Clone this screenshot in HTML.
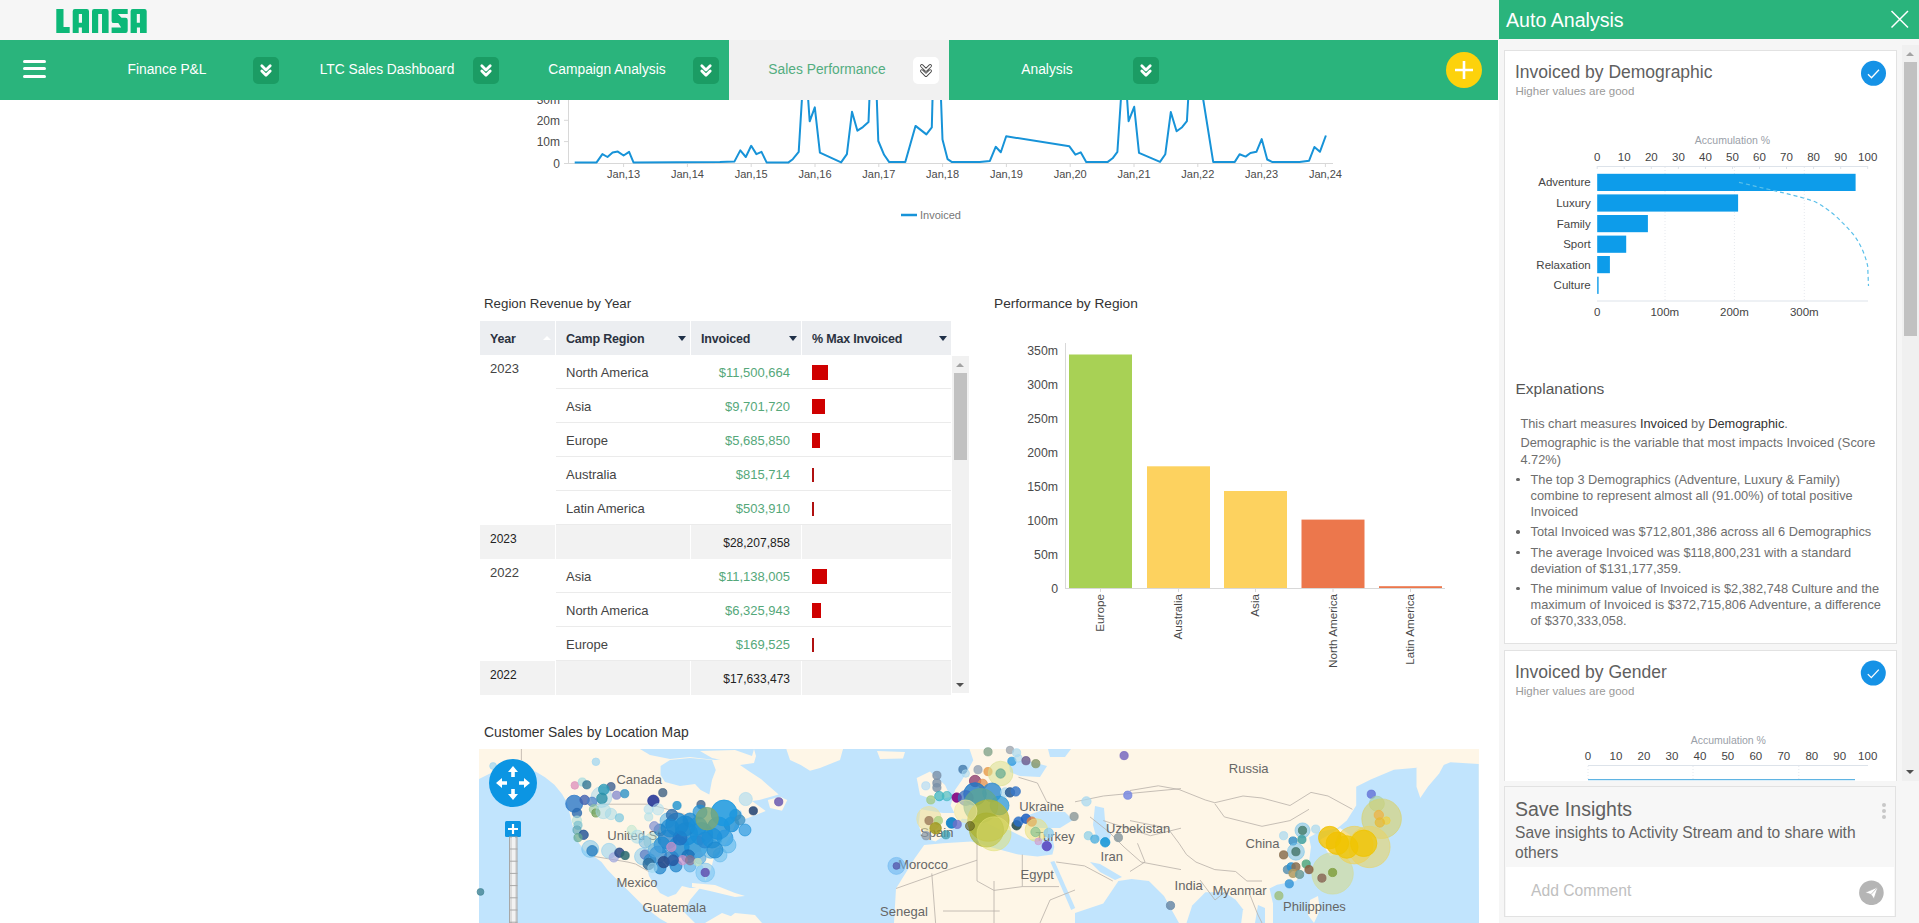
<!DOCTYPE html><html><head><meta charset="utf-8"><style>
*{box-sizing:border-box;margin:0;padding:0}
html,body{width:1919px;height:923px;overflow:hidden;background:#fff;font-family:"Liberation Sans",sans-serif;position:relative}
.a{position:absolute}
svg text{font-family:"Liberation Sans",sans-serif}
#top{left:0;top:0;width:1499px;height:40px;background:#f6f6f6}
#nav{left:0;top:40px;width:1498px;height:60px;background:#2ab47c}
.ham{left:23px;height:3px;width:23px;background:#fff;border-radius:2px}
.tab{top:40px;height:60px;width:220px}
.tab .t{position:absolute;left:0;width:196px;top:0;height:60px;line-height:59px;text-align:center;font-size:13.8px;color:#fff;white-space:nowrap}
.tab .bx{position:absolute;left:184px;top:17px;width:26px;height:27px;border-radius:5px;background:#1b9c64}
.tab.act{background:#f1f1f1}
.tab.act .t{color:#53ad7f}
.tab.act .bx{background:#fff}
#plus{left:1446px;top:52px;width:36px;height:36px;border-radius:50%;background:#fdd20c}
.ax{font-size:11px;fill:#4a4a4a}
.ax2{font-size:12.3px;fill:#4a4a4a}
.ttl2{font-size:13.7px;fill:#333}
.ttl{font-size:13.3px;color:#333;white-space:nowrap}
.th{background:#eceef1;font-size:12.5px;font-weight:700;color:#2b3240;white-space:nowrap;letter-spacing:-0.2px}
.tri-up{width:0;height:0;border-left:4px solid transparent;border-right:4px solid transparent;border-bottom:4px solid #fff}
.tri-dn{width:0;height:0;border-left:4px solid transparent;border-right:4px solid transparent;border-top:5px solid #1f3048}
.yr{font-size:13px;color:#444;white-space:nowrap}
.rg{font-size:13px;color:#444;white-space:nowrap}
.vl{font-size:13px;color:#55a87a;white-space:nowrap}
.sub{font-size:12px;color:#222;white-space:nowrap}
.card{background:#fff;border:1px solid #e2e2e2}
.acc{font-size:10.5px;fill:#9aa0a8}
.pax{font-size:11.5px;fill:#444}
.ex{font-size:12.8px;color:#6e6e6e;white-space:nowrap}
.ex b{font-weight:400;color:#333}
.ml{font-size:13px;fill:#666}
</style></head><body>
<svg class="a" style="left:0;top:0" width="1499" height="923">
<line x1="568.5" y1="60" x2="568.5" y2="163.5" stroke="#d8d8d8" stroke-width="1"/>
<line x1="568" y1="163.5" x2="1333" y2="163.5" stroke="#d8d8d8" stroke-width="1"/>
<line x1="564" y1="99.2" x2="568" y2="99.2" stroke="#d8d8d8"/>
<text x="560" y="103.5" text-anchor="end" class="ax" style="font-size:12px">30m</text>
<line x1="564" y1="120.3" x2="568" y2="120.3" stroke="#d8d8d8"/>
<text x="560" y="124.6" text-anchor="end" class="ax" style="font-size:12px">20m</text>
<line x1="564" y1="141.6" x2="568" y2="141.6" stroke="#d8d8d8"/>
<text x="560" y="145.9" text-anchor="end" class="ax" style="font-size:12px">10m</text>
<line x1="564" y1="163.5" x2="568" y2="163.5" stroke="#d8d8d8"/>
<text x="560" y="167.8" text-anchor="end" class="ax" style="font-size:12px">0</text>
<line x1="623.6" y1="163.5" x2="623.6" y2="167" stroke="#d8d8d8"/>
<text x="623.6" y="178" text-anchor="middle" class="ax">Jan,13</text>
<line x1="687.4" y1="163.5" x2="687.4" y2="167" stroke="#d8d8d8"/>
<text x="687.4" y="178" text-anchor="middle" class="ax">Jan,14</text>
<line x1="751.2" y1="163.5" x2="751.2" y2="167" stroke="#d8d8d8"/>
<text x="751.2" y="178" text-anchor="middle" class="ax">Jan,15</text>
<line x1="815.0" y1="163.5" x2="815.0" y2="167" stroke="#d8d8d8"/>
<text x="815.0" y="178" text-anchor="middle" class="ax">Jan,16</text>
<line x1="878.8" y1="163.5" x2="878.8" y2="167" stroke="#d8d8d8"/>
<text x="878.8" y="178" text-anchor="middle" class="ax">Jan,17</text>
<line x1="942.6" y1="163.5" x2="942.6" y2="167" stroke="#d8d8d8"/>
<text x="942.6" y="178" text-anchor="middle" class="ax">Jan,18</text>
<line x1="1006.4" y1="163.5" x2="1006.4" y2="167" stroke="#d8d8d8"/>
<text x="1006.4" y="178" text-anchor="middle" class="ax">Jan,19</text>
<line x1="1070.2" y1="163.5" x2="1070.2" y2="167" stroke="#d8d8d8"/>
<text x="1070.2" y="178" text-anchor="middle" class="ax">Jan,20</text>
<line x1="1134.0" y1="163.5" x2="1134.0" y2="167" stroke="#d8d8d8"/>
<text x="1134.0" y="178" text-anchor="middle" class="ax">Jan,21</text>
<line x1="1197.8" y1="163.5" x2="1197.8" y2="167" stroke="#d8d8d8"/>
<text x="1197.8" y="178" text-anchor="middle" class="ax">Jan,22</text>
<line x1="1261.6" y1="163.5" x2="1261.6" y2="167" stroke="#d8d8d8"/>
<text x="1261.6" y="178" text-anchor="middle" class="ax">Jan,23</text>
<line x1="1325.4" y1="163.5" x2="1325.4" y2="167" stroke="#d8d8d8"/>
<text x="1325.4" y="178" text-anchor="middle" class="ax">Jan,24</text>
<path d="M574.7,162.4 L596.6,162.4 L602.4,154.1 L607.5,157 L612.6,152.6 L617.8,151.6 L623.6,155.5 L629.1,151.9 L633.5,162.4 L719.9,162.1 L734.5,161.4 L740.3,150.4 L745.8,157 L751.2,145.8 L756.4,154.1 L761.5,151.9 L766.6,162.4 L788.5,162.4 L792.8,159.2 L798.7,151.9 L803.1,80 L806.8,80 L809.7,121.3 L814.8,107.4 L819.9,152.6 L841.1,162.4 L846.9,154.1 L852,111.8 L857.4,130.7 L862.9,127.1 L868.5,122 L870.2,80 L876.1,80 L878.3,141 L884.1,154.8 L889.2,162.1 L905.3,162.1 L910.4,143.9 L915.5,125.9 L926.4,134.4 L931.8,127.4 L933,80 L940.3,80 L942.5,139.5 L947.6,159.2 L952,162.1 L979.7,162.1 L989.9,160.9 L995.7,146.8 L1000.8,152.2 L1006.2,136.3 L1069.4,146.3 L1075.4,154.7 L1080.7,152.3 L1086.2,161.9 L1107.8,161.9 L1112.6,158.3 L1117.4,151.8 L1122.2,80 L1125.8,80 L1128.6,121.2 L1134.2,106.8 L1139,152.8 L1160,161.9 L1165.3,154.2 L1170.8,112.1 L1176.6,131.2 L1182.1,127.2 L1186.9,121.2 L1189.3,80 L1200.1,80 L1213.2,161.9 L1234.8,161.9 L1239.6,154.2 L1245.6,156.6 L1250.4,153 L1256.4,151.8 L1261.7,139.1 L1267.2,159.5 L1272,161.9 L1299.5,161.9 L1309.1,160.7 L1314.4,147 L1319.9,151.8 L1325.9,135.5" fill="none" stroke="#1793d8" stroke-width="2" stroke-linejoin="round"/>
<line x1="901" y1="215" x2="917" y2="215" stroke="#1793d8" stroke-width="2.5"/>
<text x="920" y="219" class="ax" style="fill:#777">Invoiced</text>
<text x="994" y="308" class="ttl2">Performance by Region</text>
<line x1="1065.5" y1="343" x2="1065.5" y2="588.5" stroke="#d8d8d8"/>
<line x1="1065" y1="588.5" x2="1445" y2="588.5" stroke="#d8d8d8"/>
<text x="1058" y="592.5" text-anchor="end" class="ax2">0</text>
<text x="1058" y="558.6" text-anchor="end" class="ax2">50m</text>
<text x="1058" y="524.7" text-anchor="end" class="ax2">100m</text>
<text x="1058" y="490.7" text-anchor="end" class="ax2">150m</text>
<text x="1058" y="456.8" text-anchor="end" class="ax2">200m</text>
<text x="1058" y="422.9" text-anchor="end" class="ax2">250m</text>
<text x="1058" y="389.0" text-anchor="end" class="ax2">300m</text>
<text x="1058" y="355.1" text-anchor="end" class="ax2">350m</text>
<rect x="1069" y="354.5" width="63" height="233.5" fill="#a8d155"/>
<line x1="1100.5" y1="588.5" x2="1100.5" y2="592" stroke="#d8d8d8"/>
<text transform="translate(1104.1,594) rotate(-90)" text-anchor="end" class="ax2" style="font-size:11.7px">Europe</text>
<rect x="1147" y="466.3" width="63" height="121.69999999999999" fill="#fdd25f"/>
<line x1="1178.5" y1="588.5" x2="1178.5" y2="592" stroke="#d8d8d8"/>
<text transform="translate(1182.1,594) rotate(-90)" text-anchor="end" class="ax2" style="font-size:11.7px">Australia</text>
<rect x="1224" y="491" width="63" height="97" fill="#fdd25f"/>
<line x1="1255.5" y1="588.5" x2="1255.5" y2="592" stroke="#d8d8d8"/>
<text transform="translate(1259.1,594) rotate(-90)" text-anchor="end" class="ax2" style="font-size:11.7px">Asia</text>
<rect x="1301.5" y="519.6" width="63.0" height="68.39999999999998" fill="#ec774c"/>
<line x1="1333.0" y1="588.5" x2="1333.0" y2="592" stroke="#d8d8d8"/>
<text transform="translate(1336.6,594) rotate(-90)" text-anchor="end" class="ax2" style="font-size:11.7px">North America</text>
<rect x="1379" y="586.2" width="63" height="1.7999999999999545" fill="#ec774c"/>
<line x1="1410.5" y1="588.5" x2="1410.5" y2="592" stroke="#d8d8d8"/>
<text transform="translate(1414.1,594) rotate(-90)" text-anchor="end" class="ax2" style="font-size:11.7px">Latin America</text>
<rect x="479" y="749" width="1000" height="174" fill="#fef6e7"/>
<polygon points="479,779 490,773.5 502,770 516,768 535.5,771.6 545,777.3 554.4,784.8 562,794 567.6,803.7 569.5,813 571.4,820.6 573.3,828.2 575.1,835.7 579,843.3 584.6,850.8 594,856.4 601.5,862.1 607.2,869.6 614.7,877.2 622.3,884.7 633.6,896 644.9,907.3 660,918.7 667.5,923 479,923" fill="#c1e4fd"/>
<polygon points="646.8,866.8 658,862 677,860 695.8,862 703,866 705.2,881 710.9,869.6 714.6,854.6 722.3,849 731,835 740.8,809.7 744,819.4 765.7,811 752,801 759.2,800 778.7,794.5 770,787 761.3,779.3 748.3,770.7 740,765 754,763 756,756 754,749 786.3,749 790,760 800.8,765 810,770.7 820,768 840,760 843,749 969.5,749 973.3,760.3 968,770 962,780 955,790 950.6,805.5 954.4,813 943,813 920.5,809.3 918.6,824.4 922.4,837.6 935.6,841.4 954.4,828.2 962,818.7 980,820 1000,830 1009,830 1028,839.5 1052.4,837.6 1054.3,847 1052.4,854.6 1037.4,856.4 1018.5,854.6 990.2,847 971.4,841.4 943,843.3 924.2,845 914.8,858.3 905.4,873.4 896,888.5 894,923 750,923 722,913 705,923 695,923 684,912 690,900 700,888 690,888 682,886 676,894 668,897 660,893 654,884 649,876" fill="#c1e4fd"/>
<polygon points="660.6,766 670,760 690,758 712,760 715.8,770 712,780 709.3,794.5 700.7,790 695,784 680,786 665,782 660.6,775" fill="#c1e4fd"/>
<polygon points="640,749 754,749 752,756 715,760 690,757 670,759 650,755" fill="#c1e4fd"/>
<polygon points="1020,818 1040,811 1065,812 1073,820 1060,828 1035,828" fill="#c1e4fd"/>
<polygon points="1095,806 1104,808 1105,820 1111,835 1108,843 1097,840 1093,825" fill="#c1e4fd"/>
<polygon points="1050.4,862 1054.4,861 1075.2,908 1071.2,910" fill="#c1e4fd"/>
<polygon points="1090,862 1100,864 1122,877 1115,880 1100,872" fill="#c1e4fd"/>
<polygon points="1075,923 1075,913 1103.3,903.6 1118.4,881 1131.6,879 1148.9,881 1164,896 1173.4,913 1179,923" fill="#c1e4fd"/>
<polygon points="1186.5,923 1192.2,905.5 1205.4,892.3 1224.3,892.3 1235.6,899.8 1243,909.2 1241.2,923" fill="#c1e4fd"/>
<polygon points="1273,923 1273,903.6 1269.5,888.5 1277,884.7 1296,881 1305.3,869.6 1309,862 1311,847 1309,837.6 1318.5,832 1337.4,828.2 1346.8,820.6 1356.2,805.5 1356.2,786.7 1371.3,779.2 1393.9,769.7 1416.5,767.8 1431.6,769.7 1450.5,762.2 1478.7,764 1479,923" fill="#c1e4fd"/>
<polygon points="1009,764 1025,760 1047,766 1040,777 1020,776 1010,772" fill="#c1e4fd"/>
<polygon points="1048,749 1071,749 1065,757 1050,757" fill="#c1e4fd"/>
<polygon points="1255,923 1258,905 1265,908 1265,923" fill="#c1e4fd"/>
<polygon points="692,883 715,885 735,893 745,896 735,897 710,891 692,887" fill="#fef6e7"/>
<polygon points="767.8,800 780,796.7 787.3,800 782,810.8 770,808" fill="#fef6e7"/>
<polygon points="700,751 735,750 752,756 748,762 730,762 712,758" fill="#fef6e7"/>
<polygon points="722,923 735,913 755,915 762,923" fill="#fef6e7"/>
<polygon points="877,751 905,752 903,758.4 880,759" fill="#fef6e7"/>
<polygon points="916.7,778 930,771.6 945,785 950.6,797 935,800 920,795" fill="#fef6e7"/>
<polygon points="820,749 843,749 838,757 822,759" fill="#fef6e7"/>
<polygon points="1416.5,767.8 1444.8,763 1439.2,773.5 1427.9,786.7 1420.3,798 1416.5,786.7" fill="#fef6e7"/>
<polygon points="1320,840 1340,828 1350,835 1345,852 1330,856" fill="#fef6e7"/>
<polygon points="1310,900 1318,896 1320,910 1314,923 1308,915" fill="#fef6e7"/>
<path d="M584.6,804.2 L648.7,804.2 L667.5,809.3 L686.4,815" fill="none" stroke="#b8b0a8" stroke-width="0.8"/>
<path d="M594,856.4 L628,862.1 L635.5,864 L648.7,871.5" fill="none" stroke="#b8b0a8" stroke-width="0.8"/>
<path d="M1130,790.5 L1158.3,785.8 L1179,789.5 L1205.4,800 L1214.8,802.7 L1243,796 L1262,798 L1290,805.5 L1311,792.4 L1328,796 L1352.4,809.3" fill="none" stroke="#b8b0a8" stroke-width="0.8"/>
<path d="M1214.8,803.7 L1224.3,816.9 L1262,826.3 L1290,820.6 L1309,809.3" fill="none" stroke="#b8b0a8" stroke-width="0.8"/>
<path d="M1130,820.6 L1167.7,828.2 L1179,843.3 L1186.5,854.6 L1196,862.1 L1214.8,869.6 L1235.6,871.5 L1246.9,881 L1262,881" fill="none" stroke="#b8b0a8" stroke-width="0.8"/>
<path d="M1137.5,843.3 L1145,862 L1130,871.5" fill="none" stroke="#b8b0a8" stroke-width="0.8"/>
<path d="M896,888.5 L928,877.2 L943,871.5 L977,860.2" fill="none" stroke="#b8b0a8" stroke-width="0.8"/>
<path d="M977,841.4 L977,881 L994,890.4 L1022.3,886.6 L1059,886.6" fill="none" stroke="#b8b0a8" stroke-width="0.8"/>
<path d="M1022.3,854.6 L1022.3,886.6" fill="none" stroke="#b8b0a8" stroke-width="0.8"/>
<path d="M931.8,873.4 L935.6,923" fill="none" stroke="#b8b0a8" stroke-width="0.8"/>
<path d="M994,881 L994,923" fill="none" stroke="#b8b0a8" stroke-width="0.8"/>
<path d="M943,911 L999.7,911" fill="none" stroke="#b8b0a8" stroke-width="0.8"/>
<path d="M1056.2,862 L1084.5,865.9 L1112.8,881" fill="none" stroke="#b8b0a8" stroke-width="0.8"/>
<path d="M1090,816.9 L1109,832 L1124,847 L1141,862 L1181,869.6" fill="none" stroke="#b8b0a8" stroke-width="0.8"/>
<path d="M1018.5,777.3 L1037.4,783 L1046.8,801.8 L1056.2,805.5" fill="none" stroke="#b8b0a8" stroke-width="0.8"/>
<path d="M1075,801.8 L1103.3,796 L1141,792.4 L1181,788.6" fill="none" stroke="#b8b0a8" stroke-width="0.8"/>
<path d="M1103.3,820.6 L1150.5,835.7 L1181,828.2" fill="none" stroke="#b8b0a8" stroke-width="0.8"/>
<path d="M1040,923 L1050,900 L1075,890" fill="none" stroke="#b8b0a8" stroke-width="0.8"/>
<path d="M1200,880 L1215,900 L1225,892" fill="none" stroke="#b8b0a8" stroke-width="0.8"/>
<path d="M1250,895 L1258,915 L1262,923" fill="none" stroke="#b8b0a8" stroke-width="0.8"/>
<text x="616.4" y="784" class="ml">Canada</text>
<text x="607.3" y="839.8" class="ml">United St</text>
<text x="616.4" y="886.7" class="ml">Mexico</text>
<text x="642.6" y="911.6" class="ml">Guatemala</text>
<text x="898.1" y="868.8" class="ml">Morocco</text>
<text x="920.2" y="837" class="ml">Spain</text>
<text x="880.1" y="915.7" class="ml">Senegal</text>
<text x="1228.8" y="773.4" class="ml">Russia</text>
<text x="1019.3" y="810.8" class="ml">Ukraine</text>
<text x="1106" y="833" class="ml">Uzbekistan</text>
<text x="1035.6" y="841.1" class="ml">Turkey</text>
<text x="1100.6" y="861.4" class="ml">Iran</text>
<text x="1245.6" y="847.9" class="ml">China</text>
<text x="1020.6" y="879" class="ml">Egypt</text>
<text x="1174.6" y="889.9" class="ml">India</text>
<text x="1212.5" y="895.3" class="ml">Myanmar</text>
<text x="1283" y="911" class="ml">Philippines</text>
<circle cx="595.9" cy="761.8" r="3.8" fill="#a8d8f0" fill-opacity="0.8" stroke="#a8d8f0" stroke-opacity="0.9500000000000001" stroke-width="0.8"/>
<circle cx="493.1" cy="766" r="3.4" fill="#a8d8f0" fill-opacity="0.8" stroke="#a8d8f0" stroke-opacity="0.9500000000000001" stroke-width="0.8"/>
<circle cx="480.5" cy="891.9" r="3.4" fill="#4a8a9a" fill-opacity="0.85" stroke="#4a8a9a" stroke-opacity="1" stroke-width="0.8"/>
<circle cx="574.8" cy="785.4" r="3.8" fill="#e09ac0" fill-opacity="0.85" stroke="#e09ac0" stroke-opacity="1" stroke-width="0.8"/>
<circle cx="582.3" cy="782" r="4.1" fill="#9ad8e0" fill-opacity="0.6" stroke="#9ad8e0" stroke-opacity="0.75" stroke-width="0.8"/>
<circle cx="586.8" cy="784.8" r="4.1" fill="#3f7f9a" fill-opacity="0.85" stroke="#3f7f9a" stroke-opacity="1" stroke-width="0.8"/>
<circle cx="611" cy="786.7" r="4.1" fill="#4a6a98" fill-opacity="0.85" stroke="#4a6a98" stroke-opacity="1" stroke-width="0.8"/>
<circle cx="601.5" cy="797" r="10.4" fill="#9ad0ea" fill-opacity="0.45" stroke="#9ad0ea" stroke-opacity="0.6" stroke-width="0.8"/>
<circle cx="603.8" cy="789.5" r="5.3" fill="#2a9ab8" fill-opacity="0.8" stroke="#2a9ab8" stroke-opacity="0.9500000000000001" stroke-width="0.8"/>
<circle cx="601.9" cy="798.4" r="5.3" fill="#2a90a8" fill-opacity="0.8" stroke="#2a90a8" stroke-opacity="0.9500000000000001" stroke-width="0.8"/>
<circle cx="616.6" cy="795.2" r="4.1" fill="#8a90d0" fill-opacity="0.8" stroke="#8a90d0" stroke-opacity="0.9500000000000001" stroke-width="0.8"/>
<circle cx="624.7" cy="793.7" r="4.1" fill="#3a98c8" fill-opacity="0.85" stroke="#3a98c8" stroke-opacity="1" stroke-width="0.8"/>
<circle cx="574.2" cy="803.7" r="8.5" fill="#2a78c8" fill-opacity="0.8" stroke="#2a78c8" stroke-opacity="0.9500000000000001" stroke-width="0.8"/>
<circle cx="584.6" cy="799.9" r="4.7" fill="#4060b0" fill-opacity="0.8" stroke="#4060b0" stroke-opacity="0.9500000000000001" stroke-width="0.8"/>
<circle cx="577" cy="813" r="4.7" fill="#2a6ab0" fill-opacity="0.8" stroke="#2a6ab0" stroke-opacity="0.9500000000000001" stroke-width="0.8"/>
<circle cx="592.1" cy="801.8" r="4.7" fill="#4a80c8" fill-opacity="0.7" stroke="#4a80c8" stroke-opacity="0.85" stroke-width="0.8"/>
<circle cx="594" cy="809.3" r="4.7" fill="#90c8a0" fill-opacity="0.6" stroke="#90c8a0" stroke-opacity="0.75" stroke-width="0.8"/>
<circle cx="595.9" cy="813" r="4.1" fill="#6a9a50" fill-opacity="0.7" stroke="#6a9a50" stroke-opacity="0.85" stroke-width="0.8"/>
<circle cx="603.4" cy="811.2" r="7.5" fill="#a0d8e8" fill-opacity="0.5" stroke="#a0d8e8" stroke-opacity="0.65" stroke-width="0.8"/>
<circle cx="611" cy="814" r="5.7" fill="#a0d8e8" fill-opacity="0.5" stroke="#a0d8e8" stroke-opacity="0.65" stroke-width="0.8"/>
<circle cx="619.4" cy="817.8" r="4.1" fill="#7ac8e0" fill-opacity="0.7" stroke="#7ac8e0" stroke-opacity="0.85" stroke-width="0.8"/>
<circle cx="577" cy="820.6" r="4.7" fill="#b0e0d8" fill-opacity="0.6" stroke="#b0e0d8" stroke-opacity="0.75" stroke-width="0.8"/>
<circle cx="578" cy="825.3" r="4.1" fill="#7ac0d0" fill-opacity="0.7" stroke="#7ac0d0" stroke-opacity="0.85" stroke-width="0.8"/>
<circle cx="577" cy="830" r="4.1" fill="#60a8b8" fill-opacity="0.7" stroke="#60a8b8" stroke-opacity="0.85" stroke-width="0.8"/>
<circle cx="583.6" cy="834.8" r="4.7" fill="#2a5898" fill-opacity="0.85" stroke="#2a5898" stroke-opacity="1" stroke-width="0.8"/>
<circle cx="578" cy="837.6" r="4.1" fill="#60a890" fill-opacity="0.7" stroke="#60a890" stroke-opacity="0.85" stroke-width="0.8"/>
<circle cx="590.2" cy="848.9" r="8.5" fill="#70c0ec" fill-opacity="0.5" stroke="#70c0ec" stroke-opacity="0.65" stroke-width="0.8"/>
<circle cx="592.1" cy="850.8" r="5.3" fill="#2a80c0" fill-opacity="0.8" stroke="#2a80c0" stroke-opacity="0.9500000000000001" stroke-width="0.8"/>
<circle cx="609" cy="850.8" r="7.5" fill="#90d0f0" fill-opacity="0.55" stroke="#90d0f0" stroke-opacity="0.7000000000000001" stroke-width="0.8"/>
<circle cx="613.8" cy="857.4" r="4.7" fill="#a0a8e0" fill-opacity="0.7" stroke="#a0a8e0" stroke-opacity="0.85" stroke-width="0.8"/>
<circle cx="619.4" cy="852.7" r="4.7" fill="#2a4a88" fill-opacity="0.85" stroke="#2a4a88" stroke-opacity="1" stroke-width="0.8"/>
<circle cx="625.1" cy="855.5" r="4.1" fill="#2a6a70" fill-opacity="0.85" stroke="#2a6a70" stroke-opacity="1" stroke-width="0.8"/>
<circle cx="631.7" cy="830" r="4.7" fill="#c0e8d0" fill-opacity="0.6" stroke="#c0e8d0" stroke-opacity="0.75" stroke-width="0.8"/>
<circle cx="637.3" cy="836.7" r="6.6" fill="#a8dcea" fill-opacity="0.55" stroke="#a8dcea" stroke-opacity="0.7000000000000001" stroke-width="0.8"/>
<circle cx="643" cy="856.4" r="8.5" fill="#80c8f0" fill-opacity="0.5" stroke="#80c8f0" stroke-opacity="0.65" stroke-width="0.8"/>
<circle cx="644.9" cy="854.6" r="4.7" fill="#5a78c0" fill-opacity="0.7" stroke="#5a78c0" stroke-opacity="0.85" stroke-width="0.8"/>
<circle cx="652.4" cy="841.4" r="8.5" fill="#b0dcd0" fill-opacity="0.5" stroke="#b0dcd0" stroke-opacity="0.65" stroke-width="0.8"/>
<circle cx="648.7" cy="809.3" r="4.7" fill="#b0e0f0" fill-opacity="0.6" stroke="#b0e0f0" stroke-opacity="0.75" stroke-width="0.8"/>
<circle cx="648.7" cy="816.9" r="4.1" fill="#b0e0e8" fill-opacity="0.6" stroke="#b0e0e8" stroke-opacity="0.75" stroke-width="0.8"/>
<circle cx="653.4" cy="800.8" r="5.7" fill="#283898" fill-opacity="0.9" stroke="#283898" stroke-opacity="1" stroke-width="0.8"/>
<circle cx="662.8" cy="792.7" r="4.1" fill="#4a6a88" fill-opacity="0.85" stroke="#4a6a88" stroke-opacity="1" stroke-width="0.8"/>
<circle cx="658" cy="809.3" r="5.7" fill="#b0e0f0" fill-opacity="0.55" stroke="#b0e0f0" stroke-opacity="0.7000000000000001" stroke-width="0.8"/>
<circle cx="677" cy="805.5" r="4.1" fill="#2a98d0" fill-opacity="0.85" stroke="#2a98d0" stroke-opacity="1" stroke-width="0.8"/>
<circle cx="701" cy="804.6" r="4.1" fill="#4a6a90" fill-opacity="0.85" stroke="#4a6a90" stroke-opacity="1" stroke-width="0.8"/>
<circle cx="745.7" cy="799" r="6.6" fill="#a8daf0" fill-opacity="0.6" stroke="#a8daf0" stroke-opacity="0.75" stroke-width="0.8"/>
<circle cx="753.3" cy="810.8" r="4.1" fill="#2a4a78" fill-opacity="0.9" stroke="#2a4a78" stroke-opacity="1" stroke-width="0.8"/>
<circle cx="778.7" cy="801.8" r="4.1" fill="#6858b0" fill-opacity="0.85" stroke="#6858b0" stroke-opacity="1" stroke-width="0.8"/>
<circle cx="705.2" cy="872.5" r="9.4" fill="#70c0f0" fill-opacity="0.5" stroke="#70c0f0" stroke-opacity="0.65" stroke-width="0.8"/>
<circle cx="705.2" cy="872.5" r="4.1" fill="#6050b0" fill-opacity="0.85" stroke="#6050b0" stroke-opacity="1" stroke-width="0.8"/>
<circle cx="667.5" cy="820.6" r="7.5" fill="#60b8e8" fill-opacity="0.6" stroke="#60b8e8" stroke-opacity="0.75" stroke-width="0.8"/>
<circle cx="677" cy="824.4" r="11.3" fill="#1a88d0" fill-opacity="0.8" stroke="#1a88d0" stroke-opacity="0.9500000000000001" stroke-width="0.8"/>
<circle cx="686.4" cy="833.8" r="11.3" fill="#1a88d0" fill-opacity="0.8" stroke="#1a88d0" stroke-opacity="0.9500000000000001" stroke-width="0.8"/>
<circle cx="701.4" cy="833.8" r="11.3" fill="#1a90d8" fill-opacity="0.8" stroke="#1a90d8" stroke-opacity="0.9500000000000001" stroke-width="0.8"/>
<circle cx="718.4" cy="828.2" r="11.3" fill="#1a90d8" fill-opacity="0.8" stroke="#1a90d8" stroke-opacity="0.9500000000000001" stroke-width="0.8"/>
<circle cx="667.5" cy="839.5" r="9.4" fill="#2a80c8" fill-opacity="0.75" stroke="#2a80c8" stroke-opacity="0.9" stroke-width="0.8"/>
<circle cx="678.8" cy="847" r="10.4" fill="#1a88d0" fill-opacity="0.8" stroke="#1a88d0" stroke-opacity="0.9500000000000001" stroke-width="0.8"/>
<circle cx="695.8" cy="847" r="11.3" fill="#1a90d8" fill-opacity="0.8" stroke="#1a90d8" stroke-opacity="0.9500000000000001" stroke-width="0.8"/>
<circle cx="710.9" cy="848.9" r="9.4" fill="#50b0e8" fill-opacity="0.6" stroke="#50b0e8" stroke-opacity="0.75" stroke-width="0.8"/>
<circle cx="658" cy="854.6" r="8.5" fill="#2a88d0" fill-opacity="0.7" stroke="#2a88d0" stroke-opacity="0.85" stroke-width="0.8"/>
<circle cx="671.3" cy="858.3" r="7.5" fill="#2a80c8" fill-opacity="0.75" stroke="#2a80c8" stroke-opacity="0.9" stroke-width="0.8"/>
<circle cx="688.2" cy="856.4" r="6.6" fill="#1a70b8" fill-opacity="0.8" stroke="#1a70b8" stroke-opacity="0.9500000000000001" stroke-width="0.8"/>
<circle cx="731.6" cy="824.4" r="7.5" fill="#1a90d8" fill-opacity="0.8" stroke="#1a90d8" stroke-opacity="0.9500000000000001" stroke-width="0.8"/>
<circle cx="735.4" cy="815" r="5.7" fill="#2a90c8" fill-opacity="0.8" stroke="#2a90c8" stroke-opacity="0.9500000000000001" stroke-width="0.8"/>
<circle cx="724" cy="813" r="13" fill="#1a98e0" fill-opacity="0.85" stroke="#1a98e0" stroke-opacity="1" stroke-width="0.8"/>
<circle cx="672" cy="815" r="5.7" fill="#3070b0" fill-opacity="0.8" stroke="#3070b0" stroke-opacity="0.9500000000000001" stroke-width="0.8"/>
<circle cx="660" cy="830" r="6" fill="#2a80c0" fill-opacity="0.75" stroke="#2a80c0" stroke-opacity="0.9" stroke-width="0.8"/>
<circle cx="690" cy="820" r="7" fill="#1a88d0" fill-opacity="0.8" stroke="#1a88d0" stroke-opacity="0.9500000000000001" stroke-width="0.8"/>
<circle cx="705" cy="840" r="8" fill="#2a88d0" fill-opacity="0.75" stroke="#2a88d0" stroke-opacity="0.9" stroke-width="0.8"/>
<circle cx="680" cy="838" r="7" fill="#2070c0" fill-opacity="0.8" stroke="#2070c0" stroke-opacity="0.9500000000000001" stroke-width="0.8"/>
<circle cx="650" cy="860" r="6" fill="#2a88c8" fill-opacity="0.7" stroke="#2a88c8" stroke-opacity="0.85" stroke-width="0.8"/>
<circle cx="725" cy="838" r="8" fill="#2a98e0" fill-opacity="0.75" stroke="#2a98e0" stroke-opacity="0.9" stroke-width="0.8"/>
<circle cx="740" cy="820" r="5" fill="#3a90c0" fill-opacity="0.75" stroke="#3a90c0" stroke-opacity="0.9" stroke-width="0.8"/>
<circle cx="700" cy="858" r="6" fill="#50a8e0" fill-opacity="0.65" stroke="#50a8e0" stroke-opacity="0.8" stroke-width="0.8"/>
<circle cx="662" cy="845" r="8" fill="#1a88d0" fill-opacity="0.7" stroke="#1a88d0" stroke-opacity="0.85" stroke-width="0.8"/>
<circle cx="655" cy="850" r="7" fill="#50a8e0" fill-opacity="0.55" stroke="#50a8e0" stroke-opacity="0.7000000000000001" stroke-width="0.8"/>
<circle cx="670" cy="828" r="9" fill="#1a88d0" fill-opacity="0.7" stroke="#1a88d0" stroke-opacity="0.85" stroke-width="0.8"/>
<circle cx="685" cy="826" r="10" fill="#1a88d0" fill-opacity="0.75" stroke="#1a88d0" stroke-opacity="0.9" stroke-width="0.8"/>
<circle cx="698" cy="826" r="9" fill="#1a90d8" fill-opacity="0.75" stroke="#1a90d8" stroke-opacity="0.9" stroke-width="0.8"/>
<circle cx="712" cy="838" r="10" fill="#1a90d8" fill-opacity="0.7" stroke="#1a90d8" stroke-opacity="0.85" stroke-width="0.8"/>
<circle cx="728" cy="845" r="8" fill="#50b0e8" fill-opacity="0.55" stroke="#50b0e8" stroke-opacity="0.7000000000000001" stroke-width="0.8"/>
<circle cx="720" cy="855" r="7" fill="#60b8e8" fill-opacity="0.5" stroke="#60b8e8" stroke-opacity="0.65" stroke-width="0.8"/>
<circle cx="690" cy="866" r="6" fill="#50a8e0" fill-opacity="0.55" stroke="#50a8e0" stroke-opacity="0.7000000000000001" stroke-width="0.8"/>
<circle cx="660" cy="868" r="6" fill="#1a80c8" fill-opacity="0.7" stroke="#1a80c8" stroke-opacity="0.85" stroke-width="0.8"/>
<circle cx="676" cy="866" r="6" fill="#1a80c8" fill-opacity="0.7" stroke="#1a80c8" stroke-opacity="0.85" stroke-width="0.8"/>
<circle cx="645" cy="842" r="6" fill="#60b0e0" fill-opacity="0.5" stroke="#60b0e0" stroke-opacity="0.65" stroke-width="0.8"/>
<circle cx="745" cy="830" r="6" fill="#1a90d8" fill-opacity="0.6" stroke="#1a90d8" stroke-opacity="0.75" stroke-width="0.8"/>
<circle cx="700" cy="812" r="7" fill="#1a90d8" fill-opacity="0.7" stroke="#1a90d8" stroke-opacity="0.85" stroke-width="0.8"/>
<circle cx="715" cy="850" r="8" fill="#1a88d0" fill-opacity="0.65" stroke="#1a88d0" stroke-opacity="0.8" stroke-width="0.8"/>
<circle cx="707.1" cy="818.7" r="11.3" fill="#78a878" fill-opacity="0.8" stroke="#78a878" stroke-opacity="0.9500000000000001" stroke-width="0.8"/>
<circle cx="654.3" cy="826.3" r="4.7" fill="#8090d0" fill-opacity="0.7" stroke="#8090d0" stroke-opacity="0.85" stroke-width="0.8"/>
<circle cx="671.3" cy="847" r="4.7" fill="#d090c8" fill-opacity="0.7" stroke="#d090c8" stroke-opacity="0.85" stroke-width="0.8"/>
<circle cx="682.6" cy="860.2" r="4.7" fill="#d090c8" fill-opacity="0.7" stroke="#d090c8" stroke-opacity="0.85" stroke-width="0.8"/>
<circle cx="690.1" cy="860.2" r="4.7" fill="#8a7090" fill-opacity="0.7" stroke="#8a7090" stroke-opacity="0.85" stroke-width="0.8"/>
<circle cx="697.7" cy="862.1" r="3.8" fill="#c0e0c0" fill-opacity="0.7" stroke="#c0e0c0" stroke-opacity="0.85" stroke-width="0.8"/>
<circle cx="648.7" cy="864" r="5.7" fill="#2a6a98" fill-opacity="0.8" stroke="#2a6a98" stroke-opacity="0.9500000000000001" stroke-width="0.8"/>
<circle cx="652.4" cy="867.8" r="4.7" fill="#a0d8f0" fill-opacity="0.6" stroke="#a0d8f0" stroke-opacity="0.75" stroke-width="0.8"/>
<circle cx="663.7" cy="862.1" r="5.7" fill="#2a4a88" fill-opacity="0.85" stroke="#2a4a88" stroke-opacity="1" stroke-width="0.8"/>
<circle cx="673.1" cy="860.2" r="5.3" fill="#2a58a0" fill-opacity="0.8" stroke="#2a58a0" stroke-opacity="0.9500000000000001" stroke-width="0.8"/>
<circle cx="988" cy="751.8" r="4.1" fill="#8aa890" fill-opacity="0.85" stroke="#8aa890" stroke-opacity="1" stroke-width="0.8"/>
<circle cx="1010" cy="750" r="3.8" fill="#a0a8b0" fill-opacity="0.8" stroke="#a0a8b0" stroke-opacity="0.9500000000000001" stroke-width="0.8"/>
<circle cx="1016.6" cy="752.8" r="4.1" fill="#a8d8f0" fill-opacity="0.7" stroke="#a8d8f0" stroke-opacity="0.85" stroke-width="0.8"/>
<circle cx="1011.9" cy="761.3" r="4.1" fill="#3aa0e0" fill-opacity="0.85" stroke="#3aa0e0" stroke-opacity="1" stroke-width="0.8"/>
<circle cx="1018.5" cy="758.4" r="3.8" fill="#a8d8f0" fill-opacity="0.6" stroke="#a8d8f0" stroke-opacity="0.75" stroke-width="0.8"/>
<circle cx="1026" cy="760.7" r="4.1" fill="#706090" fill-opacity="0.85" stroke="#706090" stroke-opacity="1" stroke-width="0.8"/>
<circle cx="1035.8" cy="763.7" r="4.1" fill="#8a9a70" fill-opacity="0.85" stroke="#8a9a70" stroke-opacity="1" stroke-width="0.8"/>
<circle cx="962.9" cy="769.4" r="4.1" fill="#4a80b0" fill-opacity="0.85" stroke="#4a80b0" stroke-opacity="1" stroke-width="0.8"/>
<circle cx="965.7" cy="773.5" r="3.8" fill="#a8d8f0" fill-opacity="0.6" stroke="#a8d8f0" stroke-opacity="0.75" stroke-width="0.8"/>
<circle cx="978" cy="769.7" r="4.1" fill="#9aa8b8" fill-opacity="0.85" stroke="#9aa8b8" stroke-opacity="1" stroke-width="0.8"/>
<circle cx="988" cy="771.6" r="4.1" fill="#e8a050" fill-opacity="0.85" stroke="#e8a050" stroke-opacity="1" stroke-width="0.8"/>
<circle cx="1000.6" cy="773.5" r="12.3" fill="#d8e090" fill-opacity="0.55" stroke="#d8e090" stroke-opacity="0.7000000000000001" stroke-width="0.8"/>
<circle cx="1000.6" cy="773.5" r="4.7" fill="#60a890" fill-opacity="0.7" stroke="#60a890" stroke-opacity="0.85" stroke-width="0.8"/>
<circle cx="936.9" cy="775.4" r="4.1" fill="#7a90a8" fill-opacity="0.8" stroke="#7a90a8" stroke-opacity="0.9500000000000001" stroke-width="0.8"/>
<circle cx="936.9" cy="783" r="4.1" fill="#7a90a8" fill-opacity="0.8" stroke="#7a90a8" stroke-opacity="0.9500000000000001" stroke-width="0.8"/>
<circle cx="936.9" cy="787.6" r="4.1" fill="#7a90a8" fill-opacity="0.8" stroke="#7a90a8" stroke-opacity="0.9500000000000001" stroke-width="0.8"/>
<circle cx="925.8" cy="785.8" r="4.1" fill="#a8d8f8" fill-opacity="0.6" stroke="#a8d8f8" stroke-opacity="0.75" stroke-width="0.8"/>
<circle cx="930.8" cy="799.9" r="4.1" fill="#a0c880" fill-opacity="0.75" stroke="#a0c880" stroke-opacity="0.9" stroke-width="0.8"/>
<circle cx="939.3" cy="796.1" r="4.7" fill="#30b0c0" fill-opacity="0.7" stroke="#30b0c0" stroke-opacity="0.85" stroke-width="0.8"/>
<circle cx="946.9" cy="796.1" r="4.7" fill="#40b8c0" fill-opacity="0.65" stroke="#40b8c0" stroke-opacity="0.8" stroke-width="0.8"/>
<circle cx="956.7" cy="797.6" r="4.7" fill="#800080" fill-opacity="0.9" stroke="#800080" stroke-opacity="1" stroke-width="0.8"/>
<circle cx="975.1" cy="781" r="5.7" fill="#904070" fill-opacity="0.8" stroke="#904070" stroke-opacity="0.9500000000000001" stroke-width="0.8"/>
<circle cx="982.7" cy="783.9" r="4.7" fill="#e09050" fill-opacity="0.75" stroke="#e09050" stroke-opacity="0.9" stroke-width="0.8"/>
<circle cx="975" cy="794" r="11.3" fill="#1a78c8" fill-opacity="0.8" stroke="#1a78c8" stroke-opacity="0.9500000000000001" stroke-width="0.8"/>
<circle cx="992" cy="792.4" r="9.4" fill="#2a88d0" fill-opacity="0.8" stroke="#2a88d0" stroke-opacity="0.9500000000000001" stroke-width="0.8"/>
<circle cx="999.6" cy="805.5" r="9.4" fill="#2a98d8" fill-opacity="0.75" stroke="#2a98d8" stroke-opacity="0.9" stroke-width="0.8"/>
<circle cx="965.7" cy="798" r="7.5" fill="#3a70c0" fill-opacity="0.75" stroke="#3a70c0" stroke-opacity="0.9" stroke-width="0.8"/>
<circle cx="980.8" cy="805.5" r="17" fill="#60a890" fill-opacity="0.7" stroke="#60a890" stroke-opacity="0.85" stroke-width="0.8"/>
<circle cx="988.4" cy="820.6" r="20.7" fill="#b8b830" fill-opacity="0.75" stroke="#b8b830" stroke-opacity="0.9" stroke-width="0.8"/>
<circle cx="986.5" cy="830" r="17" fill="#a8b030" fill-opacity="0.7" stroke="#a8b030" stroke-opacity="0.85" stroke-width="0.8"/>
<circle cx="994" cy="833.8" r="17" fill="#e0e070" fill-opacity="0.5" stroke="#e0e070" stroke-opacity="0.65" stroke-width="0.8"/>
<circle cx="965.7" cy="811.2" r="11.3" fill="#f0e8a0" fill-opacity="0.55" stroke="#f0e8a0" stroke-opacity="0.7000000000000001" stroke-width="0.8"/>
<circle cx="970" cy="826" r="4.5" fill="#5a5a20" fill-opacity="0.6" stroke="#5a5a20" stroke-opacity="0.75" stroke-width="0.8"/>
<circle cx="1005.3" cy="792.4" r="4.7" fill="#a8d8f0" fill-opacity="0.7" stroke="#a8d8f0" stroke-opacity="0.85" stroke-width="0.8"/>
<circle cx="1010" cy="792.4" r="4.7" fill="#2a5a90" fill-opacity="0.85" stroke="#2a5a90" stroke-opacity="1" stroke-width="0.8"/>
<circle cx="1015.7" cy="791.4" r="4.7" fill="#3a78c8" fill-opacity="0.85" stroke="#3a78c8" stroke-opacity="1" stroke-width="0.8"/>
<circle cx="929" cy="818.7" r="12.3" fill="#e8e0a0" fill-opacity="0.6" stroke="#e8e0a0" stroke-opacity="0.75" stroke-width="0.8"/>
<circle cx="929" cy="820.6" r="4.1" fill="#a08060" fill-opacity="0.85" stroke="#a08060" stroke-opacity="1" stroke-width="0.8"/>
<circle cx="938.4" cy="820.6" r="4.1" fill="#a8d080" fill-opacity="0.75" stroke="#a8d080" stroke-opacity="0.9" stroke-width="0.8"/>
<circle cx="935.6" cy="828.2" r="5.7" fill="#a09820" fill-opacity="0.85" stroke="#a09820" stroke-opacity="1" stroke-width="0.8"/>
<circle cx="926.1" cy="835.7" r="4.1" fill="#8898a8" fill-opacity="0.75" stroke="#8898a8" stroke-opacity="0.9" stroke-width="0.8"/>
<circle cx="945.9" cy="834.8" r="4.1" fill="#40a0b0" fill-opacity="0.75" stroke="#40a0b0" stroke-opacity="0.9" stroke-width="0.8"/>
<circle cx="951.6" cy="822.9" r="5.3" fill="#0a80c8" fill-opacity="0.9" stroke="#0a80c8" stroke-opacity="1" stroke-width="0.8"/>
<circle cx="957.2" cy="824.4" r="4.1" fill="#7070c8" fill-opacity="0.8" stroke="#7070c8" stroke-opacity="0.9500000000000001" stroke-width="0.8"/>
<circle cx="1016.6" cy="825.3" r="4.7" fill="#2a5050" fill-opacity="0.9" stroke="#2a5050" stroke-opacity="1" stroke-width="0.8"/>
<circle cx="1018.5" cy="821.6" r="4.7" fill="#2a70c8" fill-opacity="0.85" stroke="#2a70c8" stroke-opacity="1" stroke-width="0.8"/>
<circle cx="1026" cy="818.7" r="4.7" fill="#2060c0" fill-opacity="0.85" stroke="#2060c0" stroke-opacity="1" stroke-width="0.8"/>
<circle cx="1031.7" cy="821.6" r="4.7" fill="#e08040" fill-opacity="0.8" stroke="#e08040" stroke-opacity="0.9500000000000001" stroke-width="0.8"/>
<circle cx="1036.4" cy="830" r="11.3" fill="#e8e080" fill-opacity="0.55" stroke="#e8e080" stroke-opacity="0.7000000000000001" stroke-width="0.8"/>
<circle cx="1035.5" cy="832" r="4.7" fill="#80c090" fill-opacity="0.65" stroke="#80c090" stroke-opacity="0.8" stroke-width="0.8"/>
<circle cx="1048.7" cy="832.9" r="4.7" fill="#80c8f0" fill-opacity="0.7" stroke="#80c8f0" stroke-opacity="0.85" stroke-width="0.8"/>
<circle cx="1046.8" cy="846.1" r="4.7" fill="#5a48c0" fill-opacity="0.9" stroke="#5a48c0" stroke-opacity="1" stroke-width="0.8"/>
<circle cx="1038.3" cy="841.4" r="3.4" fill="#d0a0d0" fill-opacity="0.7" stroke="#d0a0d0" stroke-opacity="0.85" stroke-width="0.8"/>
<circle cx="1074.1" cy="816.5" r="4.1" fill="#909c9c" fill-opacity="0.85" stroke="#909c9c" stroke-opacity="1" stroke-width="0.8"/>
<circle cx="1086.4" cy="801.4" r="4.7" fill="#a8d8f0" fill-opacity="0.75" stroke="#a8d8f0" stroke-opacity="0.9" stroke-width="0.8"/>
<circle cx="1127.8" cy="795.2" r="4.1" fill="#7888e0" fill-opacity="0.85" stroke="#7888e0" stroke-opacity="1" stroke-width="0.8"/>
<circle cx="1124.1" cy="755.6" r="4.1" fill="#7868c0" fill-opacity="0.85" stroke="#7868c0" stroke-opacity="1" stroke-width="0.8"/>
<circle cx="1088.3" cy="835.7" r="4.1" fill="#90d0e8" fill-opacity="0.75" stroke="#90d0e8" stroke-opacity="0.9" stroke-width="0.8"/>
<circle cx="1094.8" cy="839.1" r="4.1" fill="#50b0e0" fill-opacity="0.8" stroke="#50b0e0" stroke-opacity="0.9500000000000001" stroke-width="0.8"/>
<circle cx="1105.2" cy="842.3" r="4.7" fill="#1a98d8" fill-opacity="0.9" stroke="#1a98d8" stroke-opacity="1" stroke-width="0.8"/>
<circle cx="1118.4" cy="837.6" r="4.1" fill="#8a9aa0" fill-opacity="0.85" stroke="#8a9aa0" stroke-opacity="1" stroke-width="0.8"/>
<circle cx="896.4" cy="865.9" r="8.5" fill="#70b8f0" fill-opacity="0.6" stroke="#70b8f0" stroke-opacity="0.75" stroke-width="0.8"/>
<circle cx="896.4" cy="865.9" r="3.4" fill="#5a60b0" fill-opacity="0.85" stroke="#5a60b0" stroke-opacity="1" stroke-width="0.8"/>
<circle cx="1170.5" cy="905.5" r="4.1" fill="#6a8aa8" fill-opacity="0.85" stroke="#6a8aa8" stroke-opacity="1" stroke-width="0.8"/>
<circle cx="1371.3" cy="794.2" r="4.1" fill="#6878d8" fill-opacity="0.85" stroke="#6878d8" stroke-opacity="1" stroke-width="0.8"/>
<circle cx="1376.9" cy="803.7" r="7.5" fill="#a8d0a0" fill-opacity="0.6" stroke="#a8d0a0" stroke-opacity="0.75" stroke-width="0.8"/>
<circle cx="1381.6" cy="818.7" r="19.8" fill="#d8d068" fill-opacity="0.6" stroke="#d8d068" stroke-opacity="0.75" stroke-width="0.8"/>
<circle cx="1378.8" cy="815" r="4.7" fill="#f0b040" fill-opacity="0.7" stroke="#f0b040" stroke-opacity="0.85" stroke-width="0.8"/>
<circle cx="1386.4" cy="820.6" r="3.8" fill="#f0d040" fill-opacity="0.7" stroke="#f0d040" stroke-opacity="0.85" stroke-width="0.8"/>
<circle cx="1379.8" cy="822.5" r="4.7" fill="#e8b830" fill-opacity="0.7" stroke="#e8b830" stroke-opacity="0.85" stroke-width="0.8"/>
<circle cx="1332.6" cy="873.4" r="20.7" fill="#d0dca0" fill-opacity="0.7" stroke="#d0dca0" stroke-opacity="0.85" stroke-width="0.8"/>
<circle cx="1332.6" cy="872.5" r="4.1" fill="#80a040" fill-opacity="0.85" stroke="#80a040" stroke-opacity="1" stroke-width="0.8"/>
<circle cx="1321.9" cy="878.1" r="4.1" fill="#8a6a58" fill-opacity="0.85" stroke="#8a6a58" stroke-opacity="1" stroke-width="0.8"/>
<circle cx="1369.4" cy="847" r="20.7" fill="#e8d468" fill-opacity="0.6" stroke="#e8d468" stroke-opacity="0.75" stroke-width="0.8"/>
<circle cx="1354.3" cy="845.1" r="18.8" fill="#f0d050" fill-opacity="0.6" stroke="#f0d050" stroke-opacity="0.75" stroke-width="0.8"/>
<circle cx="1329.8" cy="837.6" r="11.3" fill="#f0c000" fill-opacity="0.8" stroke="#f0c000" stroke-opacity="0.9500000000000001" stroke-width="0.8"/>
<circle cx="1337.4" cy="843.3" r="11.3" fill="#f0c000" fill-opacity="0.8" stroke="#f0c000" stroke-opacity="0.9500000000000001" stroke-width="0.8"/>
<circle cx="1346.8" cy="847" r="11.3" fill="#f0c400" fill-opacity="0.75" stroke="#f0c400" stroke-opacity="0.9" stroke-width="0.8"/>
<circle cx="1363.7" cy="843.3" r="13.2" fill="#f0c400" fill-opacity="0.75" stroke="#f0c400" stroke-opacity="0.9" stroke-width="0.8"/>
<circle cx="1302.5" cy="830.4" r="7.5" fill="#70c0ec" fill-opacity="0.55" stroke="#70c0ec" stroke-opacity="0.7000000000000001" stroke-width="0.8"/>
<circle cx="1302.5" cy="830.4" r="4.1" fill="#4a8070" fill-opacity="0.85" stroke="#4a8070" stroke-opacity="1" stroke-width="0.8"/>
<circle cx="1315.7" cy="829.1" r="4.1" fill="#a8d8f0" fill-opacity="0.7" stroke="#a8d8f0" stroke-opacity="0.85" stroke-width="0.8"/>
<circle cx="1283.6" cy="835.7" r="4.1" fill="#a8d8f0" fill-opacity="0.7" stroke="#a8d8f0" stroke-opacity="0.85" stroke-width="0.8"/>
<circle cx="1293" cy="841" r="4.1" fill="#3a90c8" fill-opacity="0.85" stroke="#3a90c8" stroke-opacity="1" stroke-width="0.8"/>
<circle cx="1301.9" cy="839.5" r="4.1" fill="#40a0a0" fill-opacity="0.85" stroke="#40a0a0" stroke-opacity="1" stroke-width="0.8"/>
<circle cx="1295.9" cy="851.7" r="8.5" fill="#70c0ec" fill-opacity="0.55" stroke="#70c0ec" stroke-opacity="0.7000000000000001" stroke-width="0.8"/>
<circle cx="1295.9" cy="851.7" r="4.1" fill="#4a7a70" fill-opacity="0.85" stroke="#4a7a70" stroke-opacity="1" stroke-width="0.8"/>
<circle cx="1283.6" cy="854.9" r="4.1" fill="#8a7050" fill-opacity="0.85" stroke="#8a7050" stroke-opacity="1" stroke-width="0.8"/>
<circle cx="1287.4" cy="869.6" r="4.1" fill="#5a90b0" fill-opacity="0.85" stroke="#5a90b0" stroke-opacity="1" stroke-width="0.8"/>
<circle cx="1291.2" cy="866.8" r="4.1" fill="#2a90d0" fill-opacity="0.85" stroke="#2a90d0" stroke-opacity="1" stroke-width="0.8"/>
<circle cx="1295.9" cy="866.8" r="4.1" fill="#8a7050" fill-opacity="0.85" stroke="#8a7050" stroke-opacity="1" stroke-width="0.8"/>
<circle cx="1293" cy="873.4" r="4.1" fill="#b09a60" fill-opacity="0.85" stroke="#b09a60" stroke-opacity="1" stroke-width="0.8"/>
<circle cx="1299.6" cy="874.4" r="4.1" fill="#6a9a98" fill-opacity="0.85" stroke="#6a9a98" stroke-opacity="1" stroke-width="0.8"/>
<circle cx="1306.2" cy="864" r="4.1" fill="#50a880" fill-opacity="0.85" stroke="#50a880" stroke-opacity="1" stroke-width="0.8"/>
<circle cx="1309" cy="869.6" r="4.1" fill="#8a6040" fill-opacity="0.85" stroke="#8a6040" stroke-opacity="1" stroke-width="0.8"/>
<circle cx="1289.3" cy="883.8" r="4.1" fill="#3a98d8" fill-opacity="0.85" stroke="#3a98d8" stroke-opacity="1" stroke-width="0.8"/>
<circle cx="1278.9" cy="895.7" r="4.1" fill="#a0c080" fill-opacity="0.85" stroke="#a0c080" stroke-opacity="1" stroke-width="0.8"/>
<circle cx="513" cy="783" r="24" fill="#0c95e3"/>
<g fill="#fff"><path d="M513,766 l-5,6 h3.2 v5 h3.6 v-5 h3.2z"/><path d="M513,800 l-5,-6 h3.2 v-5 h3.6 v5 h3.2z"/><path d="M496,783 l6,-5 v3.2 h5 v3.6 h-5 v3.2z"/><path d="M530,783 l-6,-5 v3.2 h-5 v3.6 h5 v3.2z"/></g>
<rect x="505" y="821" width="16" height="16" rx="1.5" fill="#0c95e3"/>
<path d="M508,829 h10 M513,824 v10" stroke="#fff" stroke-width="2.2"/>
<rect x="509.5" y="837" width="7.5" height="86" fill="#dcdcdc" stroke="#a8a8a8" stroke-width="1"/>
<rect x="512" y="837" width="3" height="86" fill="#f2f2f2"/>
<line x1="509" y1="849.0" x2="517.5" y2="849.0" stroke="#a8a8a8" stroke-width="1"/>
<line x1="509" y1="861.2" x2="517.5" y2="861.2" stroke="#a8a8a8" stroke-width="1"/>
<line x1="509" y1="873.4" x2="517.5" y2="873.4" stroke="#a8a8a8" stroke-width="1"/>
<line x1="509" y1="885.6" x2="517.5" y2="885.6" stroke="#a8a8a8" stroke-width="1"/>
<line x1="509" y1="897.8" x2="517.5" y2="897.8" stroke="#a8a8a8" stroke-width="1"/>
<line x1="509" y1="910.0" x2="517.5" y2="910.0" stroke="#a8a8a8" stroke-width="1"/>
<line x1="509" y1="922.2" x2="517.5" y2="922.2" stroke="#a8a8a8" stroke-width="1"/>
<line x1="509" y1="934.4" x2="517.5" y2="934.4" stroke="#a8a8a8" stroke-width="1"/>
<line x1="521.4" y1="749" x2="521.4" y2="760" stroke="#b0a8a0" stroke-width="0.7"/>
</svg>
<div class="a ttl" style="left:484px;top:296px">Region Revenue by Year</div>
<div class="a ttl" style="left:484px;top:724px;font-size:13.9px">Customer Sales by Location Map</div>
<div class="a th" style="left:480px;top:321px;width:75px;height:34px"><span style="position:absolute;left:10px;top:11px">Year</span></div>
<div class="a th" style="left:556px;top:321px;width:134px;height:34px"><span style="position:absolute;left:10px;top:11px">Camp Region</span></div>
<div class="a th" style="left:691px;top:321px;width:110px;height:34px"><span style="position:absolute;left:10px;top:11px">Invoiced</span></div>
<div class="a th" style="left:802px;top:321px;width:149px;height:34px"><span style="position:absolute;left:10px;top:11px">% Max Invoiced</span></div>
<div class="a tri-up" style="left:543px;top:336px"></div>
<div class="a tri-dn" style="left:678px;top:336px"></div>
<div class="a tri-dn" style="left:789px;top:336px"></div>
<div class="a tri-dn" style="left:939px;top:336px"></div>
<div class="a yr" style="left:490px;top:361px">2023</div>
<div class="a rg" style="left:566px;top:365px">North America</div>
<div class="a vl" style="left:691px;width:99px;text-align:right;top:365px">$11,500,664</div>
<div class="a" style="left:812px;top:365px;width:16px;height:15px;background:#cf0000"></div>
<div class="a" style="left:556px;top:388px;width:395px;height:1px;background:#ebebeb"></div>
<div class="a rg" style="left:566px;top:399px">Asia</div>
<div class="a vl" style="left:691px;width:99px;text-align:right;top:399px">$9,701,720</div>
<div class="a" style="left:812px;top:399px;width:13px;height:15px;background:#cf0000"></div>
<div class="a" style="left:556px;top:422px;width:395px;height:1px;background:#ebebeb"></div>
<div class="a rg" style="left:566px;top:433px">Europe</div>
<div class="a vl" style="left:691px;width:99px;text-align:right;top:433px">$5,685,850</div>
<div class="a" style="left:812px;top:433px;width:8px;height:15px;background:#cf0000"></div>
<div class="a" style="left:556px;top:456px;width:395px;height:1px;background:#ebebeb"></div>
<div class="a rg" style="left:566px;top:467px">Australia</div>
<div class="a vl" style="left:691px;width:99px;text-align:right;top:467px">$815,714</div>
<div class="a" style="left:812px;top:468px;width:1.5px;height:14px;background:#b01010"></div>
<div class="a" style="left:556px;top:490px;width:395px;height:1px;background:#ebebeb"></div>
<div class="a rg" style="left:566px;top:501px">Latin America</div>
<div class="a vl" style="left:691px;width:99px;text-align:right;top:501px">$503,910</div>
<div class="a" style="left:812px;top:502px;width:1.5px;height:14px;background:#b01010"></div>
<div class="a" style="left:556px;top:524px;width:395px;height:1px;background:#ebebeb"></div>
<div class="a" style="left:480px;top:525px;width:75px;height:34px;background:#f2f2f2"></div>
<div class="a" style="left:556px;top:525px;width:134px;height:34px;background:#f2f2f2"></div>
<div class="a" style="left:691px;top:525px;width:110px;height:34px;background:#f2f2f2"></div>
<div class="a" style="left:802px;top:525px;width:149px;height:34px;background:#f2f2f2"></div>
<div class="a sub" style="left:490px;top:532px">2023</div>
<div class="a sub" style="left:691px;width:99px;text-align:right;top:536px">$28,207,858</div>
<div class="a yr" style="left:490px;top:565px">2022</div>
<div class="a rg" style="left:566px;top:569px">Asia</div>
<div class="a vl" style="left:691px;width:99px;text-align:right;top:569px">$11,138,005</div>
<div class="a" style="left:812px;top:569px;width:15px;height:15px;background:#cf0000"></div>
<div class="a" style="left:556px;top:592px;width:395px;height:1px;background:#ebebeb"></div>
<div class="a rg" style="left:566px;top:603px">North America</div>
<div class="a vl" style="left:691px;width:99px;text-align:right;top:603px">$6,325,943</div>
<div class="a" style="left:812px;top:603px;width:9px;height:15px;background:#cf0000"></div>
<div class="a" style="left:556px;top:626px;width:395px;height:1px;background:#ebebeb"></div>
<div class="a rg" style="left:566px;top:637px">Europe</div>
<div class="a vl" style="left:691px;width:99px;text-align:right;top:637px">$169,525</div>
<div class="a" style="left:812px;top:638px;width:1.5px;height:14px;background:#b01010"></div>
<div class="a" style="left:556px;top:660px;width:395px;height:1px;background:#ebebeb"></div>
<div class="a" style="left:480px;top:661px;width:75px;height:34px;background:#f2f2f2"></div>
<div class="a" style="left:556px;top:661px;width:134px;height:34px;background:#f2f2f2"></div>
<div class="a" style="left:691px;top:661px;width:110px;height:34px;background:#f2f2f2"></div>
<div class="a" style="left:802px;top:661px;width:149px;height:34px;background:#f2f2f2"></div>
<div class="a sub" style="left:490px;top:668px">2022</div>
<div class="a sub" style="left:691px;width:99px;text-align:right;top:672px">$17,633,473</div>
<div class="a" style="left:952px;top:356px;width:17px;height:337px;background:#f1f1f1"></div>
<div class="a" style="left:954px;top:373px;width:13px;height:87px;background:#c1c1c1"></div>
<div class="a" style="left:956px;top:363px;width:0;height:0;border-left:4px solid transparent;border-right:4px solid transparent;border-bottom:4px solid #a3a3a3"></div>
<div class="a" style="left:956px;top:683px;width:0;height:0;border-left:4px solid transparent;border-right:4px solid transparent;border-top:4px solid #505050"></div>
<div id="top" class="a"></div>
<svg class="a" style="left:0;top:0" width="160" height="40" viewBox="0 0 160 40">
<g fill="#0db878">
<path d="M56.3 9h7.2v18.1h6.2v5.9H56.3z"/>
<path d="M72.7 33V11.2q0-2.2 2.2-2.2h11.9q2.2 0 2.2 2.2V33h-7.1v-5.5h-3.2V33zM78.8 13.9v8.8h3.2v-8.8z"/>
<path d="M92 33V11.2q0-2.2 2.2-2.2h12.2q2.2 0 2.2 2.2V33h-6.6V13.9h-3.8V33z"/>
<path d="M111.6 11.2q0-2.2 2.2-2.2h13.9v4.9h-9.8l3.6 3.8h4q2.2 0 2.2 2.2v10.9q0 2.2-2.2 2.2h-13.9v-5.4h9.6l-2.9-4.5h-4.5q-2.2 0-2.2-2.2z"/>
<path d="M130.6 33V11.2q0-2.2 2.2-2.2h11.7q2.2 0 2.2 2.2V33h-6.7v-5.5h-3.1V33zM136.8 13.9v8.8h3.1v-8.8z"/>
</g></svg>
<div id="nav" class="a"></div>
<div class="a ham" style="top:60px"></div>
<div class="a ham" style="top:67px"></div>
<div class="a ham" style="top:75px"></div>
<div class="a tab" style="left:69px"><div class="t">Finance P&amp;L</div><div class="bx"></div></div>
<div class="a tab" style="left:289px"><div class="t">LTC Sales Dashboard</div><div class="bx"></div></div>
<div class="a tab" style="left:509px"><div class="t">Campaign Analysis</div><div class="bx"></div></div>
<div class="a tab act" style="left:729px"><div class="t">Sales Performance</div><div class="bx"></div></div>
<div class="a tab" style="left:949px"><div class="t">Analysis</div><div class="bx"></div></div>
<svg class="a" style="left:0;top:0" width="1499" height="100"><path d="M261.8,65.8 l4.2,4.2 l4.2,-4.2 M261.8,71 l4.2,4.2 l4.2,-4.2" fill="none" stroke="#fff" stroke-width="2.8" stroke-linecap="round" stroke-linejoin="round"/><path d="M481.8,65.8 l4.2,4.2 l4.2,-4.2 M481.8,71 l4.2,4.2 l4.2,-4.2" fill="none" stroke="#fff" stroke-width="2.8" stroke-linecap="round" stroke-linejoin="round"/><path d="M701.8,65.8 l4.2,4.2 l4.2,-4.2 M701.8,71 l4.2,4.2 l4.2,-4.2" fill="none" stroke="#fff" stroke-width="2.8" stroke-linecap="round" stroke-linejoin="round"/><path d="M921.8,65.8 l4.2,4.2 l4.2,-4.2 M921.8,71 l4.2,4.2 l4.2,-4.2" fill="none" stroke="#444" stroke-width="3.4" stroke-linecap="round" stroke-linejoin="round"/><path d="M921.8,65.8 l4.2,4.2 l4.2,-4.2 M921.8,71 l4.2,4.2 l4.2,-4.2" fill="none" stroke="#fff" stroke-width="1.7" stroke-linecap="round" stroke-linejoin="round"/><path d="M1141.8,65.8 l4.2,4.2 l4.2,-4.2 M1141.8,71 l4.2,4.2 l4.2,-4.2" fill="none" stroke="#fff" stroke-width="2.8" stroke-linecap="round" stroke-linejoin="round"/><circle cx="1464" cy="70" r="18" fill="#fdd20c"/><path d="M1455,70 h18 M1464,61 v18" stroke="#fff" stroke-width="2.6"/></svg>
<div class="a" style="left:1499px;top:0;width:420px;height:923px;background:#f6f6f6"></div>
<div class="a" style="left:1499px;top:0;width:420px;height:39px;background:#2ab47c"></div>
<div class="a" style="left:1506px;top:9.2px;font-size:19.6px;color:#fff;white-space:nowrap">Auto Analysis</div>
<svg class="a" style="left:1880px;top:0" width="39" height="39"><path d="M11.5 11 L28 27.5 M28 11 L11.5 27.5" stroke="#fff" stroke-width="1.5"/></svg>
<div class="a card" style="left:1504px;top:50px;width:393px;height:594px"></div>
<div class="a" style="left:1515px;top:62px;font-size:17.5px;color:#606060;white-space:nowrap">Invoiced by Demographic</div>
<div class="a" style="left:1515.5px;top:85px;font-size:11.5px;color:#9a9a9a;white-space:nowrap">Higher values are good</div>
<div class="a card" style="left:1504px;top:650px;width:393px;height:131px;border-bottom:0"></div>
<div class="a" style="left:1515px;top:662px;font-size:17.5px;color:#606060;white-space:nowrap">Invoiced by Gender</div>
<div class="a" style="left:1515.5px;top:685px;font-size:11.5px;color:#9a9a9a;white-space:nowrap">Higher values are good</div>
<svg class="a" style="left:0;top:0" width="1919" height="923"><circle cx="1873.5" cy="73.3" r="12.5" fill="#1592e6"/><path d="M1868.0,74.3 L1871.5,77.8 L1879.0,69.8" fill="none" stroke="#fff" stroke-width="1.3"/><circle cx="1873.3" cy="673.1" r="12.5" fill="#1592e6"/><path d="M1867.8,674.1 L1871.3,677.6 L1878.8,669.6" fill="none" stroke="#fff" stroke-width="1.3"/><text x="1732.5" y="144" text-anchor="middle" class="acc">Accumulation %</text><text x="1597.2" y="160.5" text-anchor="middle" class="pax">0</text><line x1="1597.2" y1="166" x2="1597.2" y2="169" stroke="#dde3ea"/><text x="1624.2" y="160.5" text-anchor="middle" class="pax">10</text><line x1="1624.2" y1="166" x2="1624.2" y2="169" stroke="#dde3ea"/><text x="1651.3" y="160.5" text-anchor="middle" class="pax">20</text><line x1="1651.3" y1="166" x2="1651.3" y2="169" stroke="#dde3ea"/><text x="1678.4" y="160.5" text-anchor="middle" class="pax">30</text><line x1="1678.4" y1="166" x2="1678.4" y2="169" stroke="#dde3ea"/><text x="1705.4" y="160.5" text-anchor="middle" class="pax">40</text><line x1="1705.4" y1="166" x2="1705.4" y2="169" stroke="#dde3ea"/><text x="1732.5" y="160.5" text-anchor="middle" class="pax">50</text><line x1="1732.5" y1="166" x2="1732.5" y2="169" stroke="#dde3ea"/><text x="1759.5" y="160.5" text-anchor="middle" class="pax">60</text><line x1="1759.5" y1="166" x2="1759.5" y2="169" stroke="#dde3ea"/><text x="1786.5" y="160.5" text-anchor="middle" class="pax">70</text><line x1="1786.5" y1="166" x2="1786.5" y2="169" stroke="#dde3ea"/><text x="1813.6" y="160.5" text-anchor="middle" class="pax">80</text><line x1="1813.6" y1="166" x2="1813.6" y2="169" stroke="#dde3ea"/><text x="1840.7" y="160.5" text-anchor="middle" class="pax">90</text><line x1="1840.7" y1="166" x2="1840.7" y2="169" stroke="#dde3ea"/><text x="1867.7" y="160.5" text-anchor="middle" class="pax">100</text><line x1="1867.7" y1="166" x2="1867.7" y2="169" stroke="#dde3ea"/><line x1="1597" y1="166.5" x2="1868" y2="166.5" stroke="#dde3ea"/><line x1="1597" y1="301" x2="1868" y2="301" stroke="#dde3ea"/><line x1="1665" y1="167" x2="1665" y2="301" stroke="#e6e9ee" stroke-dasharray="1,2"/><line x1="1734.4" y1="167" x2="1734.4" y2="301" stroke="#e6e9ee" stroke-dasharray="1,2"/><line x1="1804.3" y1="167" x2="1804.3" y2="301" stroke="#e6e9ee" stroke-dasharray="1,2"/><text x="1597.2" y="316" text-anchor="middle" class="pax">0</text><text x="1664.8" y="316" text-anchor="middle" class="pax">100m</text><text x="1734.4" y="316" text-anchor="middle" class="pax">200m</text><text x="1804.3" y="316" text-anchor="middle" class="pax">300m</text><rect x="1597.2" y="173.8" width="258.4" height="17.2" fill="#0d9cea"/><text x="1590.7" y="186.4" text-anchor="end" class="pax">Adventure</text><rect x="1597.2" y="194.4" width="140.9" height="17.2" fill="#0d9cea"/><text x="1590.7" y="207.0" text-anchor="end" class="pax">Luxury</text><rect x="1597.2" y="215" width="50.7" height="17.2" fill="#0d9cea"/><text x="1590.7" y="227.6" text-anchor="end" class="pax">Family</text><rect x="1597.2" y="235.6" width="29.0" height="17.2" fill="#0d9cea"/><text x="1590.7" y="248.2" text-anchor="end" class="pax">Sport</text><rect x="1597.2" y="256" width="12.7" height="17.2" fill="#0d9cea"/><text x="1590.7" y="268.6" text-anchor="end" class="pax">Relaxation</text><rect x="1597.2" y="276.7" width="1.4" height="17.2" fill="#0d9cea"/><text x="1590.7" y="289.3" text-anchor="end" class="pax">Culture</text><path d="M1739,182.3 C1770,190 1800,196 1815.6,202 C1830,210 1838,218 1842.3,222.6 C1850,230 1855,236 1857.8,240.9 C1863,250 1866,258 1867.7,266.2 L1868.5,286" fill="none" stroke="#5bc0ea" stroke-width="1.2" stroke-dasharray="4,3"/><text x="1728.3" y="744.2" text-anchor="middle" class="acc">Accumulation %</text><text x="1588.0" y="760.1" text-anchor="middle" class="pax">0</text><text x="1616.0" y="760.1" text-anchor="middle" class="pax">10</text><text x="1643.9" y="760.1" text-anchor="middle" class="pax">20</text><text x="1671.9" y="760.1" text-anchor="middle" class="pax">30</text><text x="1699.9" y="760.1" text-anchor="middle" class="pax">40</text><text x="1727.8" y="760.1" text-anchor="middle" class="pax">50</text><text x="1755.8" y="760.1" text-anchor="middle" class="pax">60</text><text x="1783.8" y="760.1" text-anchor="middle" class="pax">70</text><text x="1811.8" y="760.1" text-anchor="middle" class="pax">80</text><text x="1839.7" y="760.1" text-anchor="middle" class="pax">90</text><text x="1867.7" y="760.1" text-anchor="middle" class="pax">100</text><line x1="1588" y1="765.5" x2="1868" y2="765.5" stroke="#dde3ea"/><line x1="1588" y1="766" x2="1588" y2="781" stroke="#e6e9ee" stroke-dasharray="1,2"/><line x1="1693" y1="766" x2="1693" y2="781" stroke="#e6e9ee" stroke-dasharray="1,2"/><line x1="1798.8" y1="766" x2="1798.8" y2="781" stroke="#e6e9ee" stroke-dasharray="1,2"/><line x1="1588" y1="779.7" x2="1855" y2="779.7" stroke="#3aa3dd" stroke-width="1"/></svg>
<div class="a" style="left:1515.5px;top:380px;font-size:15.5px;color:#555;white-space:nowrap">Explanations</div>
<div class="a ex" style="left:1520.4px;top:416px">This chart measures <b>Invoiced</b> by <b>Demographic</b>.</div>
<div class="a ex" style="left:1520.4px;top:435px">Demographic is the variable that most impacts Invoiced (Score</div>
<div class="a ex" style="left:1520.4px;top:451.5px">4.72%)</div>
<div class="a" style="left:1516px;top:477.6px;width:3.6px;height:3.6px;border-radius:50%;background:#666"></div>
<div class="a ex" style="left:1530.5px;top:471.6px">The top 3 Demographics (Adventure, Luxury &amp; Family)</div>
<div class="a ex" style="left:1530.5px;top:487.6px">combine to represent almost all (91.00%) of total positive</div>
<div class="a ex" style="left:1530.5px;top:504.0px">Invoiced</div>
<div class="a" style="left:1516px;top:530.4px;width:3.6px;height:3.6px;border-radius:50%;background:#666"></div>
<div class="a ex" style="left:1530.5px;top:524.4px">Total Invoiced was $712,801,386 across all 6 Demographics</div>
<div class="a" style="left:1516px;top:550.8px;width:3.6px;height:3.6px;border-radius:50%;background:#666"></div>
<div class="a ex" style="left:1530.5px;top:544.8px">The average Invoiced was $118,800,231 with a standard</div>
<div class="a ex" style="left:1530.5px;top:560.5px">deviation of $131,177,359.</div>
<div class="a" style="left:1516px;top:586.9px;width:3.6px;height:3.6px;border-radius:50%;background:#666"></div>
<div class="a ex" style="left:1530.5px;top:580.9px">The minimum value of Invoiced is $2,382,748 Culture and the</div>
<div class="a ex" style="left:1530.5px;top:597.2px">maximum of Invoiced is $372,715,806 Adventure, a difference</div>
<div class="a ex" style="left:1530.5px;top:613.3px">of $370,333,058.</div>
<div class="a" style="left:1902px;top:45px;width:17px;height:736px;background:#f0f0f0"></div>
<div class="a" style="left:1904px;top:62px;width:13px;height:274px;background:#c1c1c1"></div>
<div class="a" style="left:1906px;top:52px;width:0;height:0;border-left:4px solid transparent;border-right:4px solid transparent;border-bottom:4px solid #a3a3a3"></div>
<div class="a" style="left:1906px;top:770px;width:0;height:0;border-left:4px solid transparent;border-right:4px solid transparent;border-top:4px solid #505050"></div>
<div class="a" style="left:1504px;top:786px;width:392px;height:131px;background:#f7f7f7;border:1px solid #e2e2e2"></div>
<div class="a" style="left:1506px;top:867px;width:388px;height:49px;background:#fff"></div>
<div class="a" style="left:1515px;top:798px;font-size:19.5px;color:#606060;white-space:nowrap">Save Insights</div>
<div class="a" style="left:1515px;top:823px;font-size:15.6px;color:#646464;white-space:nowrap;line-height:20px">Save insights to Activity Stream and to share with<br>others</div>
<div class="a" style="left:1881.5px;top:803px;width:4px;height:4px;border-radius:50%;background:#c8c8c8"></div>
<div class="a" style="left:1881.5px;top:809px;width:4px;height:4px;border-radius:50%;background:#c8c8c8"></div>
<div class="a" style="left:1881.5px;top:815px;width:4px;height:4px;border-radius:50%;background:#c8c8c8"></div>
<div class="a" style="left:1531px;top:882px;font-size:15.7px;color:#c0c0c0;white-space:nowrap">Add Comment</div>
<svg class="a" style="left:1859px;top:880px" width="25" height="25"><circle cx="12.4" cy="12.8" r="12.3" fill="#b5b5b5"/><path d="M6,12.5 L19,7 L15,19 L12,14.5 Z M12,14.5 L19,7" fill="#fff" stroke="#b5b5b5" stroke-width="0.8"/></svg>
</body></html>
